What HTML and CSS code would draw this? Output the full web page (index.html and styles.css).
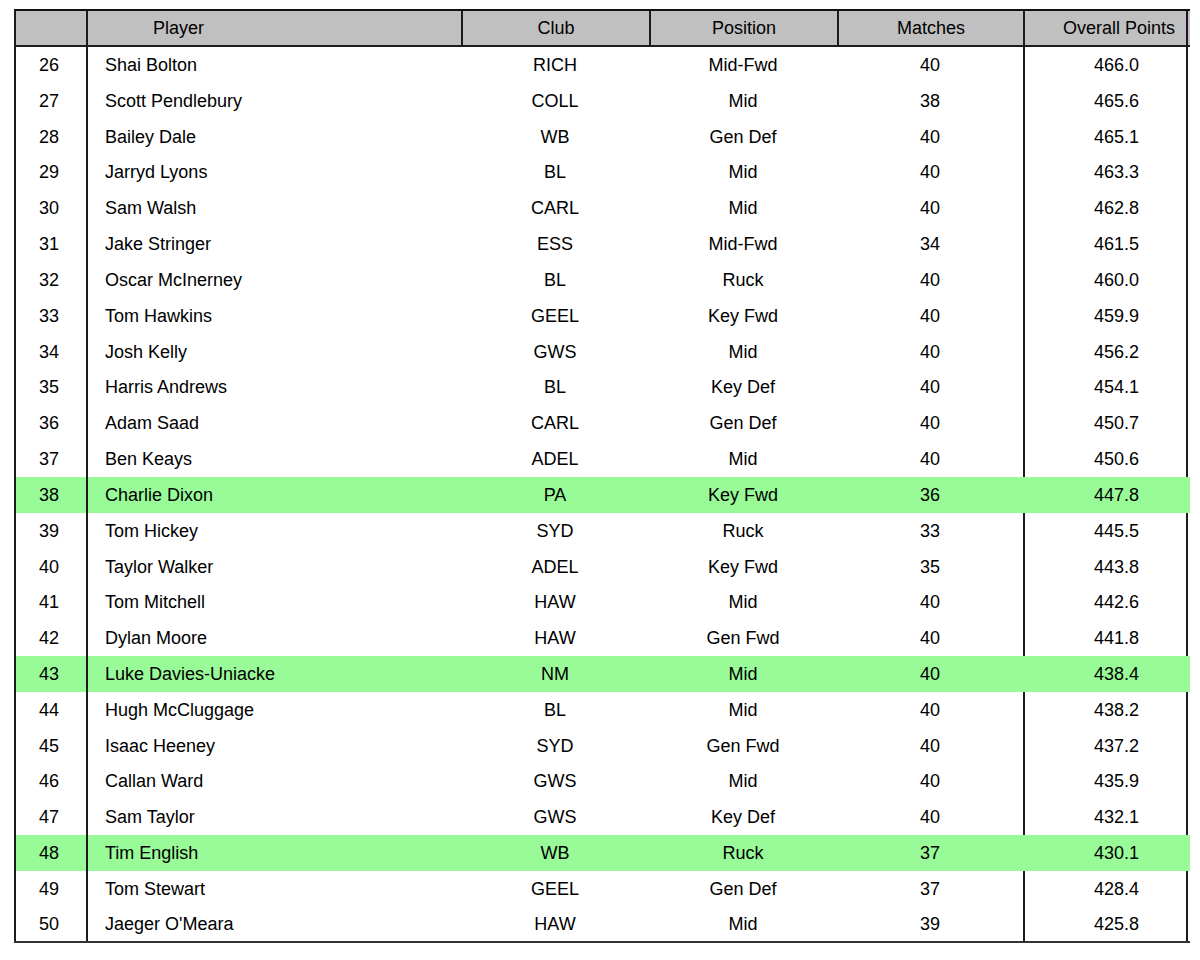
FILE: index.html
```html
<!DOCTYPE html>
<html>
<head>
<meta charset="utf-8">
<link rel="stylesheet" href="styles.css">
</head>
<body>
<div class="sheet">
  <div class="row head">
    <div class="c rank"></div>
    <div class="c player">Player</div>
    <div class="c club">Club</div>
    <div class="c pos">Position</div>
    <div class="c mat">Matches</div>
    <div class="c pts">Overall Points</div>
  </div>
  <div class="row"><div class="c rank">26</div><div class="c player">Shai Bolton</div><div class="c club">RICH</div><div class="c pos">Mid-Fwd</div><div class="c mat">40</div><div class="c pts">466.0</div></div>
  <div class="row"><div class="c rank">27</div><div class="c player">Scott Pendlebury</div><div class="c club">COLL</div><div class="c pos">Mid</div><div class="c mat">38</div><div class="c pts">465.6</div></div>
  <div class="row"><div class="c rank">28</div><div class="c player">Bailey Dale</div><div class="c club">WB</div><div class="c pos">Gen Def</div><div class="c mat">40</div><div class="c pts">465.1</div></div>
  <div class="row"><div class="c rank">29</div><div class="c player">Jarryd Lyons</div><div class="c club">BL</div><div class="c pos">Mid</div><div class="c mat">40</div><div class="c pts">463.3</div></div>
  <div class="row"><div class="c rank">30</div><div class="c player">Sam Walsh</div><div class="c club">CARL</div><div class="c pos">Mid</div><div class="c mat">40</div><div class="c pts">462.8</div></div>
  <div class="row"><div class="c rank">31</div><div class="c player">Jake Stringer</div><div class="c club">ESS</div><div class="c pos">Mid-Fwd</div><div class="c mat">34</div><div class="c pts">461.5</div></div>
  <div class="row"><div class="c rank">32</div><div class="c player">Oscar McInerney</div><div class="c club">BL</div><div class="c pos">Ruck</div><div class="c mat">40</div><div class="c pts">460.0</div></div>
  <div class="row"><div class="c rank">33</div><div class="c player">Tom Hawkins</div><div class="c club">GEEL</div><div class="c pos">Key Fwd</div><div class="c mat">40</div><div class="c pts">459.9</div></div>
  <div class="row"><div class="c rank">34</div><div class="c player">Josh Kelly</div><div class="c club">GWS</div><div class="c pos">Mid</div><div class="c mat">40</div><div class="c pts">456.2</div></div>
  <div class="row"><div class="c rank">35</div><div class="c player">Harris Andrews</div><div class="c club">BL</div><div class="c pos">Key Def</div><div class="c mat">40</div><div class="c pts">454.1</div></div>
  <div class="row"><div class="c rank">36</div><div class="c player">Adam Saad</div><div class="c club">CARL</div><div class="c pos">Gen Def</div><div class="c mat">40</div><div class="c pts">450.7</div></div>
  <div class="row"><div class="c rank">37</div><div class="c player">Ben Keays</div><div class="c club">ADEL</div><div class="c pos">Mid</div><div class="c mat">40</div><div class="c pts">450.6</div></div>
  <div class="row hl"><div class="c rank">38</div><div class="c player">Charlie Dixon</div><div class="c club">PA</div><div class="c pos">Key Fwd</div><div class="c mat">36</div><div class="c pts">447.8</div></div>
  <div class="row"><div class="c rank">39</div><div class="c player">Tom Hickey</div><div class="c club">SYD</div><div class="c pos">Ruck</div><div class="c mat">33</div><div class="c pts">445.5</div></div>
  <div class="row"><div class="c rank">40</div><div class="c player">Taylor Walker</div><div class="c club">ADEL</div><div class="c pos">Key Fwd</div><div class="c mat">35</div><div class="c pts">443.8</div></div>
  <div class="row"><div class="c rank">41</div><div class="c player">Tom Mitchell</div><div class="c club">HAW</div><div class="c pos">Mid</div><div class="c mat">40</div><div class="c pts">442.6</div></div>
  <div class="row"><div class="c rank">42</div><div class="c player">Dylan Moore</div><div class="c club">HAW</div><div class="c pos">Gen Fwd</div><div class="c mat">40</div><div class="c pts">441.8</div></div>
  <div class="row hl"><div class="c rank">43</div><div class="c player">Luke Davies-Uniacke</div><div class="c club">NM</div><div class="c pos">Mid</div><div class="c mat">40</div><div class="c pts">438.4</div></div>
  <div class="row"><div class="c rank">44</div><div class="c player">Hugh McCluggage</div><div class="c club">BL</div><div class="c pos">Mid</div><div class="c mat">40</div><div class="c pts">438.2</div></div>
  <div class="row"><div class="c rank">45</div><div class="c player">Isaac Heeney</div><div class="c club">SYD</div><div class="c pos">Gen Fwd</div><div class="c mat">40</div><div class="c pts">437.2</div></div>
  <div class="row"><div class="c rank">46</div><div class="c player">Callan Ward</div><div class="c club">GWS</div><div class="c pos">Mid</div><div class="c mat">40</div><div class="c pts">435.9</div></div>
  <div class="row"><div class="c rank">47</div><div class="c player">Sam Taylor</div><div class="c club">GWS</div><div class="c pos">Key Def</div><div class="c mat">40</div><div class="c pts">432.1</div></div>
  <div class="row hl"><div class="c rank">48</div><div class="c player">Tim English</div><div class="c club">WB</div><div class="c pos">Ruck</div><div class="c mat">37</div><div class="c pts">430.1</div></div>
  <div class="row"><div class="c rank">49</div><div class="c player">Tom Stewart</div><div class="c club">GEEL</div><div class="c pos">Gen Def</div><div class="c mat">37</div><div class="c pts">428.4</div></div>
  <div class="row last"><div class="c rank">50</div><div class="c player">Jaeger O'Meara</div><div class="c club">HAW</div><div class="c pos">Mid</div><div class="c mat">39</div><div class="c pts">425.8</div></div>
</div>
</body>
</html>
```

FILE: styles.css
```css
html, body {
  margin: 0;
  padding: 0;
  background: #ffffff;
}

body {
  font-family: "Liberation Sans", Arial, sans-serif;
  font-size: 18px;
  color: #000000;
}

.sheet {
  padding: 9px 0 0 14px;
  width: 1176px;
}

.row {
  display: grid;
  grid-template-columns: 72px 375px 188px 188px 186px 165px;
  height: 35.84px;
  box-sizing: border-box;
}

.c {
  box-sizing: border-box;
  display: flex;
  align-items: center;
  justify-content: center;
  white-space: nowrap;
  line-height: 1;
}

.rank {
  border-left: 2px solid #1c1c1c;
  padding-right: 4px;
}

.player {
  border-left: 2px solid #1c1c1c;
  justify-content: flex-start;
  padding-left: 17px;
}

.pts {
  border-left: 2px solid #1c1c1c;
  border-right: 2px solid #1c1c1c;
  padding-left: 22px;
}

.head {
  height: 38px;
  background: #c0c0c0;
  border-top: 2px solid #111111;
  border-bottom: 2px solid #1c1c1c;
}

.head .c {
  border-left: 2px solid #1c1c1c;
}

.head .player {
  padding-left: 65px;
}

.head .pts {
  justify-content: flex-end;
  padding-left: 0;
  padding-right: 11px;
  border-right: 2px solid #24132a;
}

.hl {
  background: #98fb98;
}

.hl .pts {
  border-left-color: #98fb98;
  border-right-color: #98fb98;
}

.last {
  border-bottom: 2px solid #333333;
}
```
